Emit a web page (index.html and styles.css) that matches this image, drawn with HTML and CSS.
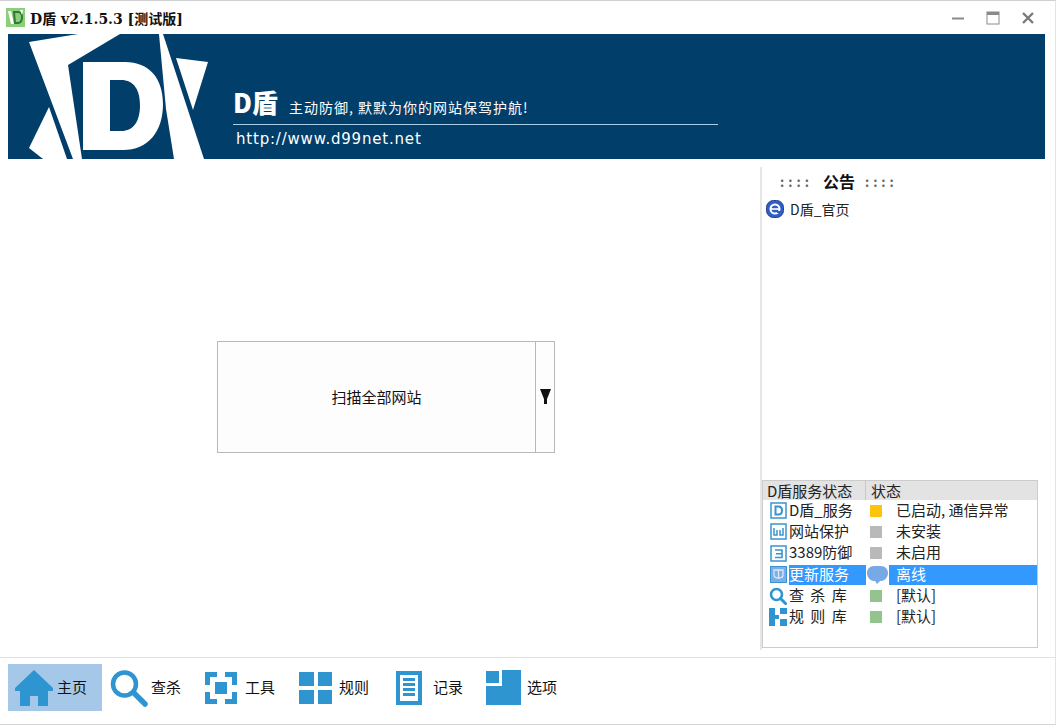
FILE: index.html
```html
<!DOCTYPE html>
<html lang="zh-CN">
<head>
    <meta charset="UTF-8">
    <title>D盾 v2.1.5.3 [测试版]</title>
    <link rel="stylesheet" href="styles.css">
</head>
<body>
    <div class="window">
        <div class="titlebar">
            <svg class="app-icon" width="19" height="19" viewBox="0 0 19 19">
                <rect width="19" height="19" fill="#8ccf7a"/>
                <path d="M2 3h3l3 13H5z" fill="#fff"/>
                <path d="M8 4h4c3 0 4 2 4 5s-1 6-4 6H9z" fill="none" stroke="#2f7a35" stroke-width="2"/>
                <path d="M14 2h3l-1 5z" fill="#fff"/>
            </svg>
            <div class="title">D盾 v2.1.5.3 [测试版]</div>
            <div class="window-buttons">
                <svg width="12" height="12" viewBox="0 0 12 12"><path d="M0 6.500h12" stroke="#8a8a8a" stroke-width="2"/></svg>
                <svg width="14" height="14" viewBox="0 0 14 14"><rect x="1" y="1" width="12" height="12" fill="none" stroke="#8a8a8a"/><path d="M1 2.500h12" stroke="#8a8a8a" stroke-width="3"/></svg>
                <svg width="12" height="12" viewBox="0 0 12 12"><path d="M1 1l10 10M11 1L1 11" stroke="#7a7a7a" stroke-width="2.400"/></svg>
            </div>
        </div>

        <div class="banner">
            <svg class="banner-logo" width="225" height="125" viewBox="0 0 225 125">
                <path d="M21 8L70 0h42L60 31l14 94h-9z" fill="#fff"/>
                <path d="M41 73L21 114l14 11h24z" fill="#fff"/>
                <path d="M151 0h4l41 125h-30l-8-50z" fill="#fff"/>
                <path d="M168 24l32 4-15 48z" fill="#fff"/>
                <path fill-rule="evenodd" d="M75 28h42c24 0 38 16 38 42 0 28-15 46-40 46H75zM102 46v51h11c13 0 19-10 19-26 0-15-6-25-19-25z" fill="#fff"/>
            </svg>
            <div class="banner-text">
                <div class="slogan-row">
                    <span class="brand">D盾</span>
                    <span class="slogan">主动防御, 默默为你的网站保驾护航!</span>
                </div>
                <div class="site-url">http://www.d99net.net</div>
            </div>
        </div>

        <div class="main">
            <div class="scan-area">
                <div class="scan-button">
                    <div class="scan-label">扫描全部网站</div>
                    <div class="scan-arrow">
                        <svg width="11" height="15" viewBox="0 0 11 15"><path d="M0 0h11L7 10v5H4v-5z" fill="#111"/></svg>
                    </div>
                </div>
            </div>

            <div class="side">
                <div class="notice-title"><span class="dots">::::</span><b>公告</b><span class="dots">::::</span></div>
                <div class="notice-item">
                    <svg width="18" height="18" viewBox="0 0 18 18">
                        <rect x="0.500" y="0.500" width="17" height="17" rx="7" fill="#2f5fc4" stroke="#24408c"/>
                        <circle cx="9" cy="9" r="4.500" fill="none" stroke="#fff" stroke-width="2"/>
                        <path d="M5 9h8" stroke="#fff" stroke-width="1.600"/>
                        <path d="M11 11h4v2h-4z" fill="#2f5fc4"/>
                    </svg>
                    <span>D盾_官页</span>
                </div>

                <div class="status-table">
                    <div class="status-head">
                        <div class="head-name">D盾服务状态</div>
                        <div class="head-state">状态</div>
                    </div>
                    <div class="status-row">
                        <svg class="row-icon" width="17" height="17" viewBox="0 0 17 17"><rect x="1" y="1" width="15" height="15" fill="#fff" stroke="#3a94cf" stroke-width="1.500"/><path d="M5.500 4.500h3c2.500 0 3.500 1.500 3.500 4s-1 4-3.500 4h-3z" fill="none" stroke="#3a94cf" stroke-width="2"/></svg>
                        <div class="row-name">D盾_服务</div>
                        <div class="dot dot-yellow"></div>
                        <div class="row-state">已启动, 通信异常</div>
                    </div>
                    <div class="status-row">
                        <svg class="row-icon" width="17" height="17" viewBox="0 0 17 17"><rect x="1" y="1" width="15" height="15" fill="#fff" stroke="#3a94cf" stroke-width="1.500"/><path d="M4 5v7h3V7M10 7v5h3V5" fill="none" stroke="#3a94cf" stroke-width="1.500"/></svg>
                        <div class="row-name">网站保护</div>
                        <div class="dot dot-gray"></div>
                        <div class="row-state">未安装</div>
                    </div>
                    <div class="status-row">
                        <svg class="row-icon" width="17" height="17" viewBox="0 0 17 17"><rect x="1" y="1" width="15" height="15" fill="#fff" stroke="#3a94cf" stroke-width="1.500"/><path d="M5 5h7v7.500H5M6 8.700h6" fill="none" stroke="#3a94cf" stroke-width="1.600"/></svg>
                        <div class="row-name">3389防御</div>
                        <div class="dot dot-gray"></div>
                        <div class="row-state">未启用</div>
                    </div>
                    <div class="status-row selected">
                        <svg class="row-icon" width="17" height="17" viewBox="0 0 17 17"><rect x="0.500" y="0.500" width="16" height="16" fill="#7aaee8" stroke="#3a94cf"/><path d="M4 4h9v5c0 2-2 3-4.500 3S4 11 4 9zM8.500 4v8" fill="none" stroke="#dbe9f8" stroke-width="1.300"/></svg>
                        <div class="row-name">更新服务</div>
                        <svg class="bubble" width="21" height="20" viewBox="0 0 21 20"><path d="M7 1h7c4 0 7 3 7 7s-3 8-7 8h-1l-3 3-2-3H7c-4 0-7-4-7-8s3-7 7-7z" fill="#76a9e6"/></svg>
                        <div class="row-state">离线</div>
                    </div>
                    <div class="status-row">
                        <svg class="row-icon" width="18" height="18" viewBox="0 0 18 18"><circle cx="7.500" cy="7.500" r="5.500" fill="none" stroke="#2f95d0" stroke-width="2.600"/><path d="M11.500 11.500l5 5" stroke="#2f95d0" stroke-width="3" stroke-linecap="round"/></svg>
                        <div class="row-name wide">查 杀 库</div>
                        <div class="dot dot-green"></div>
                        <div class="row-state">[默认]</div>
                    </div>
                    <div class="status-row">
                        <svg class="row-icon" width="18" height="18" viewBox="0 0 18 18"><path d="M0 0h6v18H0zM6 7h4v4H6zM11 0h7v6h-7zM11 11h7v7h-7z" fill="#2f95d0"/></svg>
                        <div class="row-name wide">规 则 库</div>
                        <div class="dot dot-green"></div>
                        <div class="row-state">[默认]</div>
                    </div>
                </div>
            </div>
        </div>

        <div class="toolbar">
            <div class="tool active">
                <svg width="42" height="42" viewBox="0 0 42 42"><path d="M21 3L40 21v3h-5v15H25V29h-8v10H7V24H2v-3z" fill="#2f95d0"/></svg>
                <span>主页</span>
            </div>
            <div class="tool">
                <svg width="42" height="42" viewBox="0 0 42 42"><circle cx="17.500" cy="17" r="11.500" fill="none" stroke="#2f95d0" stroke-width="4.500"/><path d="M27 26l11 11" stroke="#2f95d0" stroke-width="5.500" stroke-linecap="round"/></svg>
                <span>查杀</span>
            </div>
            <div class="tool">
                <svg width="42" height="42" viewBox="0 0 42 42"><path d="M4 5h12v5H9v8H4zM24 5h12v13h-5v-8h-7zM4 25h5v7h7v5H4zM31 25h5v12H24v-5h7z" fill="#2f95d0"/><rect x="14" y="15" width="12" height="12" fill="#2f95d0"/></svg>
                <span>工具</span>
            </div>
            <div class="tool">
                <svg width="42" height="42" viewBox="0 0 42 42"><path d="M4 5h15v14H4zM23 5h14v14H23zM4 23h15v14H4zM23 23h14v14H23z" fill="#2f95d0"/></svg>
                <span>规则</span>
            </div>
            <div class="tool">
                <svg width="42" height="42" viewBox="0 0 42 42"><rect x="7" y="4" width="26" height="34" fill="#2f95d0"/><rect x="11" y="8" width="18" height="26" fill="#fff"/><path d="M14 11h12v3H14zM14 16h12v3H14zM14 21h12v3H14zM14 26h12v3H14z" fill="#2f95d0"/></svg>
                <span>记录</span>
            </div>
            <div class="tool">
                <svg width="42" height="42" viewBox="0 0 42 42"><path d="M3 4h13v12H3zM19 3h19v35H3V19h16z" fill="#2f95d0"/></svg>
                <span>选项</span>
            </div>
        </div>
    </div>
</body>
</html>
```

FILE: styles.css
```css
* {
    margin: 0;
    padding: 0;
    box-sizing: border-box;
}

body {
    width: 1056px;
    height: 725px;
    overflow: hidden;
    background: #ffffff;
    color: #222222;
    font-family: "Noto Sans CJK SC", "Liberation Sans", sans-serif;
    font-size: 15px;
}

.window {
    height: 725px;
    display: flex;
    flex-direction: column;
    border-top: 1px solid #cfcfcf;
    border-bottom: 1px solid #d4d4d4;
    border-right: 1px solid #e4e4e4;
}

/* title bar */
.titlebar {
    height: 33px;
    display: flex;
    align-items: center;
    padding-left: 6px;
}

.app-icon {
    margin-right: 5px;
}

.title {
    font-family: "DejaVu Serif", "Noto Sans CJK SC", serif;
    font-weight: 700;
    font-size: 14px;
    color: #111111;
}

.window-buttons {
    margin-left: auto;
    display: flex;
    align-items: center;
    gap: 22px;
    padding-right: 21px;
}

/* banner */
.banner {
    height: 125px;
    margin: 0 10px 0 8px;
    background: #023e6a;
    display: flex;
    flex-shrink: 0;
}

.banner-logo {
    flex-shrink: 0;
}

.banner-text {
    width: 485px;
    padding-top: 52px;
    color: #ffffff;
}

.slogan-row {
    height: 39px;
    display: flex;
    align-items: baseline;
    border-bottom: 1px solid #a9cde6;
}

.brand {
    font-size: 26px;
    line-height: 32px;
    font-weight: 900;
    width: 56px;
}

.slogan {
    font-size: 14px;
    letter-spacing: 1px;
    margin-top: 1px;
}

.site-url {
    font-family: "DejaVu Sans", sans-serif;
    font-size: 15px;
    letter-spacing: 0.8px;
    line-height: 28px;
    padding-left: 3px;
}

/* main area */
.main {
    flex: 1;
    margin-top: 8px;
    display: flex;
}

.scan-area {
    width: 752px;
    margin-left: 8px;
    padding: 174px 0 0 209px;
}

.scan-button {
    width: 338px;
    height: 112px;
    display: flex;
    border: 1px solid #b8b8b8;
    background: #fdfdfd;
}

.scan-label {
    flex: 1;
    display: flex;
    align-items: center;
    justify-content: center;
    font-size: 15px;
    padding-bottom: 2px;
    color: #111111;
}

.scan-arrow {
    width: 19px;
    border-left: 1px solid #b8b8b8;
    display: flex;
    align-items: center;
    justify-content: center;
    padding-bottom: 2px;
}

/* right column */
.side {
    width: 285px;
    border-left: 2px solid #e6e6e6;
    display: flex;
    flex-direction: column;
}

.notice-title {
    height: 28px;
    margin-bottom: 2px;
    padding-left: 18px;
    display: flex;
    align-items: center;
    gap: 10px;
    font-size: 16px;
    color: #111111;
}

.dots {
    letter-spacing: 4px;
    font-weight: 700;
    color: #666666;
    font-size: 13px;
}

.notice-item {
    height: 24px;
    padding-left: 4px;
    display: flex;
    align-items: center;
    gap: 6px;
    font-size: 14px;
}

.status-table {
    margin: auto 0 2px 0;
    width: 276px;
    height: 168px;
    border: 1px solid #cccccc;
}

.status-head {
    height: 19px;
    display: flex;
    background: #e3e3e3;
    font-size: 15px;
    line-height: 18px;
    padding-top: 1px;
}

.head-name {
    width: 103px;
    margin-top: -1px;
    padding: 1px 0 0 4px;
    border-right: 1px solid #c8c8c8;
}

.head-state {
    padding-left: 5px;
}

.status-row {
    height: 21.300px;
    display: grid;
    grid-template-columns: 26px 77px 23px 1fr;
    align-items: center;
}

.row-icon {
    justify-self: end;
    margin-right: 2px;
}

.row-name {
    height: 20px;
    line-height: 18px;
    white-space: nowrap;
}

.row-name.wide {
    word-spacing: 3px;
}

.row-state {
    height: 20px;
    line-height: 18px;
    padding-left: 7px;
    white-space: nowrap;
}

.dot {
    width: 12px;
    height: 12px;
    margin-left: 4px;
}

.dot-yellow {
    background: #fdc40e;
}

.dot-gray {
    background: #b9b9b9;
}

.dot-green {
    background: #93c48f;
}

.selected .row-name,
.selected .row-state {
    background: #3399ff;
    color: #ffffff;
}

.bubble {
    margin-left: 1px;
}

/* bottom toolbar */
.toolbar {
    margin-top: 7px;
    padding: 6px 0 13px 8px;
    border-top: 1px solid #e2e2e2;
    display: flex;
}

.tool {
    width: 94px;
    height: 47px;
    display: flex;
    align-items: center;
    gap: 3px;
    padding-left: 5px;
    font-size: 15px;
    color: #111111;
}

.tool span {
    margin-left: -1px;
    padding-bottom: 2px;
}

.tool.active {
    background: #a6c8e8;
}
```
